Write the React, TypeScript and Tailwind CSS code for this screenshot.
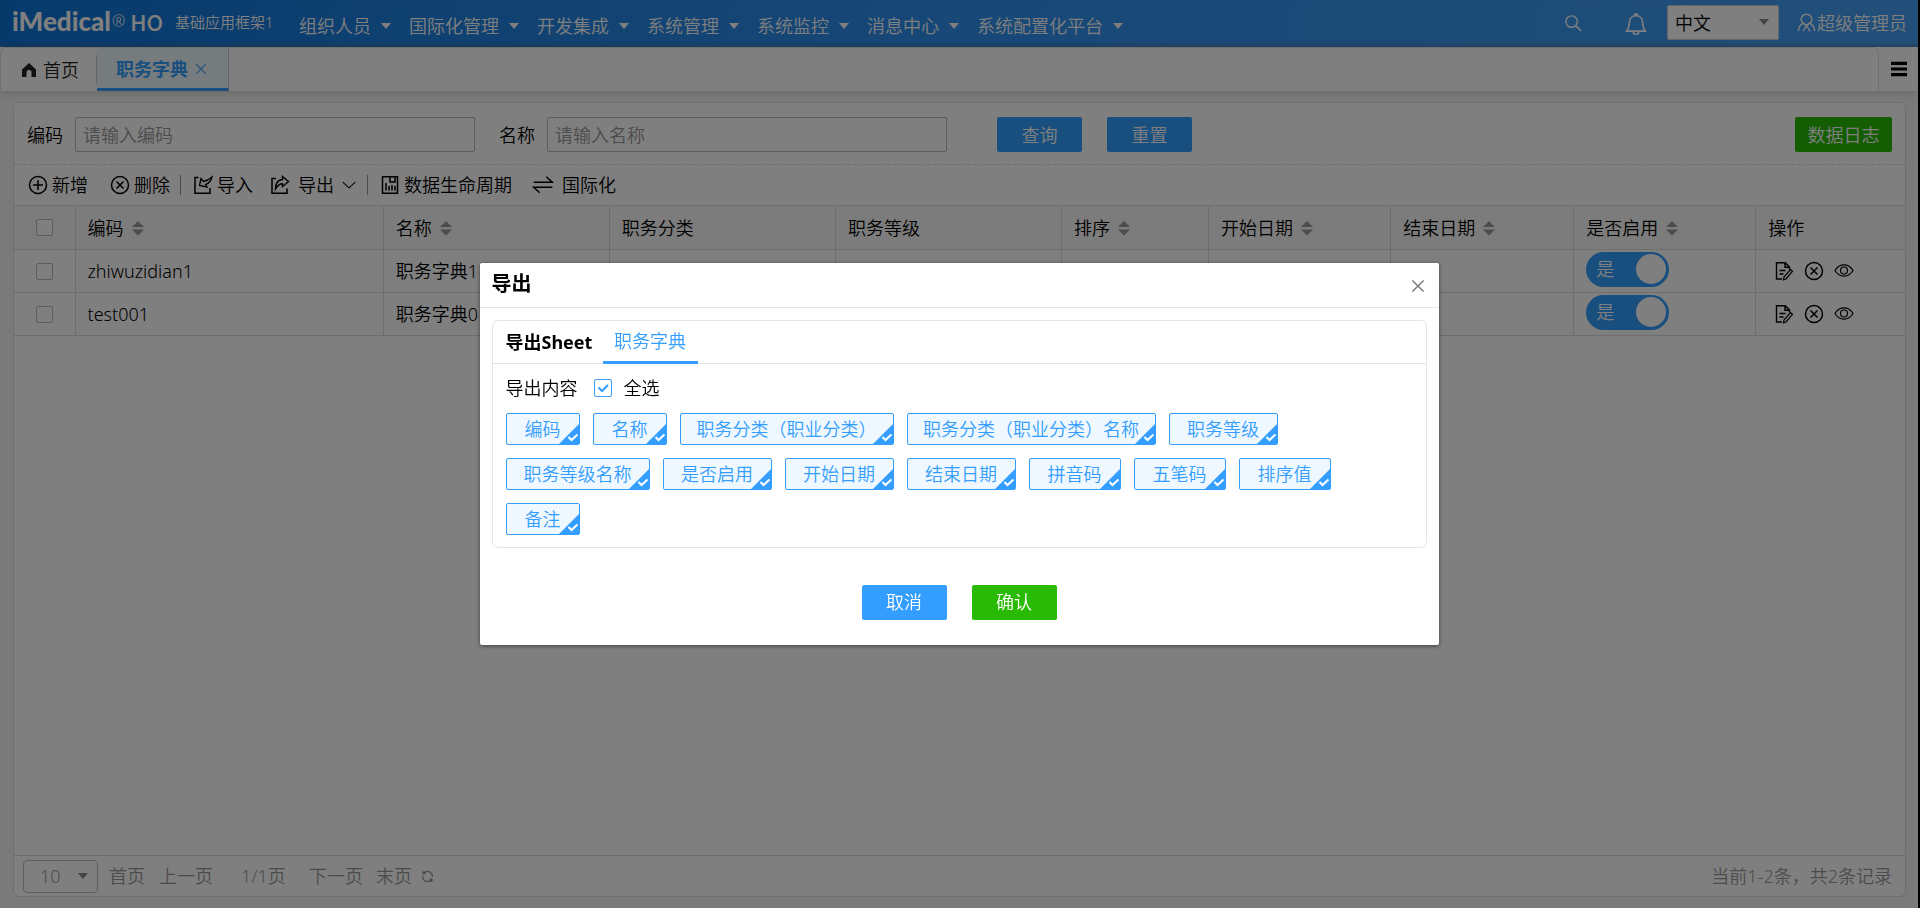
import { useState } from "react";
import type { ReactNode } from "react";
import clsx from "clsx";

const menus = [
  "组织人员",
  "国际化管理",
  "开发集成",
  "系统管理",
  "系统监控",
  "消息中心",
  "系统配置化平台",
];

const columns = [
  { title: "编码", width: "w-[308px]", sortable: true },
  { title: "名称", width: "w-[226px]", sortable: true },
  { title: "职务分类", width: "w-[226px]", sortable: false },
  { title: "职务等级", width: "w-[226px]", sortable: false },
  { title: "排序", width: "w-[147px]", sortable: true },
  { title: "开始日期", width: "w-[182px]", sortable: true },
  { title: "结束日期", width: "w-[183px]", sortable: true },
  { title: "是否启用", width: "w-[182px]", sortable: true },
  { title: "操作", width: "w-[149px]", sortable: false },
];

const rows = [
  { code: "zhiwuzidian1", name: "职务字典1" },
  { code: "test001", name: "职务字典01" },
];

const exportFields = [
  { label: "编码", width: "w-[74px]" },
  { label: "名称", width: "w-[74px]" },
  { label: "职务分类（职业分类）", width: "w-[214px]" },
  { label: "职务分类（职业分类）名称", width: "w-[249px]" },
  { label: "职务等级", width: "w-[109px]" },
  { label: "职务等级名称", width: "w-[144px]" },
  { label: "是否启用", width: "w-[109px]" },
  { label: "开始日期", width: "w-[109px]" },
  { label: "结束日期", width: "w-[109px]" },
  { label: "拼音码", width: "w-[92px]" },
  { label: "五笔码", width: "w-[92px]" },
  { label: "排序值", width: "w-[92px]" },
  { label: "备注", width: "w-[74px]" },
];

type IconProps = { className?: string; children: ReactNode };

function Icon({ className, children }: IconProps) {
  return (
    <svg
      viewBox="0 0 20 20"
      fill="none"
      stroke="currentColor"
      strokeWidth="1.5"
      className={clsx("shrink-0", className ?? "size-5")}
      aria-hidden="true"
    >
      {children}
    </svg>
  );
}

const AddIcon = () => (
  <Icon>
    <circle cx="10" cy="10" r="8.5" />
    <path d="M10 5v10M5 10h10" />
  </Icon>
);

const RemoveIcon = () => (
  <Icon>
    <circle cx="10" cy="10" r="8.5" />
    <path d="M6.5 6.5l7 7M13.5 6.5l-7 7" />
  </Icon>
);

const ImportIcon = () => (
  <Icon>
    <path d="M5.500 2.500H2v15.700h15V13" />
    <path
      d="M6.500 10.500L8 3.500L10.500 6.500C13.500 6 16 4.500 19 2C18 6 16 8.500 12.500 9.500L14 12Z"
      strokeWidth="1.3"
    />
  </Icon>
);

const ExportIcon = () => (
  <Icon>
    <path d="M6 3.500H2v14.800h15V13.500" />
    <path
      d="M12.500 1.500L18.500 6.500L12.500 11.500V8.800C9.500 8.800 7.500 10.500 5.500 14C5.500 8.500 8 4.800 12.500 4.500Z"
      strokeWidth="1.4"
    />
  </Icon>
);

const LifecycleIcon = () => (
  <Icon>
    <path d="M2.500 1.800h15v16.400h-15zM10 2v5h5V2M6 8v7.500M9 11v4.500M12 10v5.500M15 11v4.500" />
  </Icon>
);

const SwapIcon = () => (
  <Icon className="size-[22px]">
    <path d="M1.500 7.500h17L13 2.500M18.500 12h-17L7 17" strokeWidth="1.3" />
  </Icon>
);

const EditIcon = () => (
  <Icon>
    <path
      d="M8 18H2.500V1.800h8.700L15.500 6v2.500M11 2v4.300h4.300M5.500 9.500h6M5.500 13h4"
      strokeWidth="1.400"
    />
    <path d="M16.500 8.500l2 1.800-6.500 7.700-2.500.8.500-2.700z" strokeWidth="1.2" />
  </Icon>
);

const EyeIcon = () => (
  <Icon>
    <path
      d="M1 9.500C5.500 2 14.500 2 19 9.500C14.500 17 5.500 17 1 9.500Z"
      strokeWidth="1.200"
    />
    <circle cx="10" cy="9.500" r="3.500" strokeWidth="1.200" />
  </Icon>
);

function Caret({ className }: { className?: string }) {
  return (
    <svg
      viewBox="0 0 10 6"
      className={clsx("w-[10px] h-[6px] shrink-0", className)}
      fill="currentColor"
      aria-hidden="true"
    >
      <path d="M0 0h10L5 6z" />
    </svg>
  );
}

function SortIcon() {
  return (
    <svg
      viewBox="0 0 12 16"
      className="w-3 h-4 shrink-0 text-[#999]"
      fill="currentColor"
      aria-hidden="true"
    >
      <path d="M6 1l6 6H0zM6 15.500l6-6H0z" />
    </svg>
  );
}

function Header() {
  return (
    <header className="flex h-[47px] items-center bg-linear-to-r from-[#0b75d8] via-[#2f90ee] to-[#449ff5] pr-[11px] text-white shadow-[inset_0_-3px_4px_-1px_rgba(90,110,130,0.5)]">
      <h1 className="ml-3 flex w-[151px] shrink-0 items-center pb-[6px] whitespace-nowrap">
        <span className="font-['Lato',sans-serif] text-[26px] leading-10 font-black">
          iMedical
        </span>
        <span className="ml-px text-base leading-6">®</span>
        <span className="ml-[5px] pt-px font-['Noto_Sans_CJK_SC',sans-serif] text-[22px] leading-9 font-medium">
          HO
        </span>
      </h1>
      <span className="ml-3 w-[100px] shrink-0 pb-1 whitespace-nowrap text-[15px]">
        基础应用框架1
      </span>
      <nav className="ml-6 flex gap-[18px] pt-1">
        {menus.map((menu) => (
          <button
            key={menu}
            type="button"
            className="flex items-center gap-[10px] whitespace-nowrap"
          >
            {menu}
            <Caret />
          </button>
        ))}
      </nav>
      <button type="button" className="ml-auto" aria-label="搜索">
        <Icon className="size-[19px]">
          <circle cx="8" cy="8" r="6" />
          <path d="M12.500 12.500l5.500 5.500" />
        </Icon>
      </button>
      <button type="button" className="ml-[42px]" aria-label="消息">
        <Icon className="size-[22px]">
          <path d="M1.500 16.500h17C16.500 14 16 12 16 8.500C16 5 13.500 2.500 10 2.500S4 5 4 8.500C4 12 3.500 14 1.500 16.500zM8.500 2.300a1.500 1.500 0 0 1 3 0M7.500 17a2.500 2.500 0 0 0 5 0" />
        </Icon>
      </button>
      <div className="relative ml-5 pb-[2px]">
        <select
          aria-label="语言"
          defaultValue="zh"
          className="block h-[35px] w-28 appearance-none rounded-xs border border-[#ccc] bg-white pl-[7px] text-black"
        >
          <option value="zh">中文</option>
        </select>
        <Caret className="pointer-events-none absolute top-[14px] right-[10px] text-[#888]" />
      </div>
      <button
        type="button"
        className="ml-[18px] flex items-center gap-px pb-[2px] whitespace-nowrap"
      >
        <Icon className="size-[19px]">
          <path d="M10 1.500a5 5 0 0 1 3 9.300C11.500 13 8.500 13 7 10.800A5 5 0 0 1 10 1.500zM1.500 19c0-4 2-6.500 5-8M18.500 19c0-4-2-6.500-5-8M6.500 19l3.500-6 3.500 6" />
        </Icon>
        超级管理员
      </button>
    </header>
  );
}

function TabBar() {
  return (
    <div className="flex h-11 bg-white shadow-[0_2px_8px_rgba(0,0,0,0.15)]">
      <div
        role="tablist"
        className="flex flex-1 rounded-t-md border border-b-0 border-[#e2e2e2]"
      >
        <button
          type="button"
          role="tab"
          aria-selected="false"
          className="my-[7px] flex w-24 items-center border-r border-[#ccc] pl-5 text-[#222]"
        >
          <svg
            viewBox="0 0 16 16"
            className="mr-[6px] size-4"
            fill="currentColor"
            aria-hidden="true"
          >
            <path d="M8 1l7 6.500V15h-4.500v-4.500a2.500 2.500 0 0 0-5 0V15H1V7.500z" />
          </svg>
          首页
        </button>
        <div className="flex w-[132px] items-center border-r border-b-3 border-r-[#ccc] border-b-[#339eff] bg-[#ecf6fd] pt-[2px] pl-[19px] text-[#339eff]">
          <button
            type="button"
            role="tab"
            aria-selected="true"
            className="whitespace-nowrap font-bold"
          >
            职务字典
          </button>
          <button type="button" aria-label="关闭" className="ml-[7px]">
            <Icon className="size-3">
              <path d="M2 2l16 16M18 2L2 18" strokeWidth="1.800" />
            </Icon>
          </button>
        </div>
      </div>
      <button
        type="button"
        aria-label="更多"
        className="flex w-[39px] items-center justify-center text-black"
      >
        <Icon className="size-4">
          <path d="M0 3h20M0 10h20M0 17h20" strokeWidth="4" />
        </Icon>
      </button>
    </div>
  );
}

function SearchForm() {
  return (
    <form
      className="flex items-center border-b border-dashed border-[#ddd] px-[13px] pt-[14px] pb-3"
      onSubmit={(e) => e.preventDefault()}
    >
      <label htmlFor="code" className="w-12 shrink-0">
        编码
      </label>
      <input
        id="code"
        placeholder="请输入编码"
        className="h-[35px] w-[400px] rounded-xs border border-[#bbb] px-[7px] placeholder:text-[#999]"
      />
      <label htmlFor="name" className="ml-6 w-12 shrink-0">
        名称
      </label>
      <input
        id="name"
        placeholder="请输入名称"
        className="h-[35px] w-[400px] rounded-xs border border-[#bbb] px-[7px] placeholder:text-[#999]"
      />
      <button
        type="submit"
        className="ml-[50px] h-[35px] w-[85px] rounded-xs bg-[#339eff] text-white"
      >
        查询
      </button>
      <button
        type="reset"
        className="ml-[25px] h-[35px] w-[85px] rounded-xs bg-[#339eff] text-white"
      >
        重置
      </button>
      <button
        type="button"
        className="ml-auto h-[35px] w-[97px] rounded-xs bg-[#28ba05] text-white"
      >
        数据日志
      </button>
    </form>
  );
}

function Toolbar() {
  return (
    <div className="flex h-10 items-center pl-[14px] text-black">
      <button type="button" className="flex w-[82px] items-center gap-1">
        <AddIcon />
        新增
      </button>
      <button type="button" className="flex w-[70px] items-center gap-1">
        <RemoveIcon />
        删除
      </button>
      <span className="mr-3 h-5 w-px bg-[#999]" />
      <button type="button" className="flex w-[77px] items-center gap-1">
        <ImportIcon />
        导入
      </button>
      <button type="button" className="flex w-[97px] items-center gap-2">
        <ExportIcon />
        导出
        <Icon className="size-[14px]">
          <path d="M1 6l9 8 9-8" />
        </Icon>
      </button>
      <span className="mr-3 h-5 w-px bg-[#999]" />
      <button type="button" className="flex w-[152px] items-center gap-1">
        <LifecycleIcon />
        数据生命周期
      </button>
      <button type="button" className="flex items-center gap-2">
        <SwapIcon />
        国际化
      </button>
    </div>
  );
}

function StatusSwitch({ label }: { label: string }) {
  return (
    <label className="relative flex h-[35px] w-[83px] cursor-pointer items-center justify-between rounded-full bg-[#339eff] pr-[3px] pl-[10px] text-white">
      <input
        type="checkbox"
        role="switch"
        defaultChecked
        aria-label={label}
        className="absolute inset-0 appearance-none"
      />
      是
      <span className="size-[30px] rounded-full bg-white" />
    </label>
  );
}

function CheckCell({ label }: { label: string }) {
  return (
    <input
      type="checkbox"
      aria-label={label}
      className="mx-auto block size-[17px] appearance-none rounded-xs border border-[#bbb] bg-white"
    />
  );
}

function DataTable() {
  return (
    <table className="w-full table-fixed border-collapse text-left text-black">
      <thead>
        <tr className="h-11 bg-[#f8f8f8]">
          <th className="w-[61px] border-y border-r border-[#ddd]">
            <CheckCell label="全选" />
          </th>
          {columns.map((col) => (
            <th
              key={col.title}
              className={clsx(
                "border border-[#ddd] px-3 font-[350] last:border-r-0",
                col.width
              )}
            >
              <span className="flex items-center gap-2">
                {col.title}
                {col.sortable && <SortIcon />}
              </span>
            </th>
          ))}
        </tr>
      </thead>
      <tbody>
        {rows.map((row) => (
          <tr key={row.code} className="h-[43px]">
            <td className="border-y border-r border-[#ddd]">
              <CheckCell label={row.code} />
            </td>
            <td className="border border-[#ddd] px-3">{row.code}</td>
            <td className="border border-[#ddd] px-3">{row.name}</td>
            <td className="border border-[#ddd]" />
            <td className="border border-[#ddd]" />
            <td className="border border-[#ddd]" />
            <td className="border border-[#ddd]" />
            <td className="border border-[#ddd]" />
            <td className="border border-[#ddd] px-3 pb-1">
              <StatusSwitch label={`${row.name} 是否启用`} />
            </td>
            <td className="border-y border-l border-[#ddd] pl-[18px]">
              <div className="flex items-center gap-[10px]">
                <button type="button" aria-label="编辑">
                  <EditIcon />
                </button>
                <button type="button" aria-label="删除">
                  <RemoveIcon />
                </button>
                <button type="button" aria-label="查看">
                  <EyeIcon />
                </button>
              </div>
            </td>
          </tr>
        ))}
      </tbody>
    </table>
  );
}

function Pagination() {
  return (
    <footer className="flex h-[41px] items-center border-t border-[#ddd] pr-[13px] pl-[9px] whitespace-nowrap text-[#999]">
      <div className="relative mr-[11px]">
        <select
          aria-label="每页条数"
          defaultValue="10"
          className="block h-[33px] w-[75px] appearance-none rounded-sm border border-[#bbb] pl-4"
        >
          <option>10</option>
        </select>
        <Caret className="pointer-events-none absolute top-[13px] right-[10px] text-[#888]" />
      </div>
      <button type="button" className="w-[50px] text-left">
        首页
      </button>
      <button type="button" className="w-[82px] text-left">
        上一页
      </button>
      <span className="w-[68px]">1/1页</span>
      <button type="button" className="w-[67px] text-left">
        下一页
      </button>
      <button type="button" className="w-[45px] text-left">
        末页
      </button>
      <button type="button" aria-label="刷新">
        <Icon className="size-[13px]">
          <path
            d="M6 3.500C11 0 18 4 17.500 11M14 16.500C9 20 2 16 2.500 9"
            strokeWidth="2"
          />
          <circle cx="4.500" cy="4.500" r="2" fill="currentColor" />
          <circle cx="15.500" cy="15.500" r="2" fill="currentColor" />
        </Icon>
      </button>
      <span className="ml-auto">当前1-2条，共2条记录</span>
    </footer>
  );
}

function FieldTag({ label, width }: { label: string; width: string }) {
  const [selected, setSelected] = useState(true);

  return (
    <button
      type="button"
      aria-pressed={selected}
      onClick={() => setSelected(!selected)}
      className={clsx(
        "relative h-8 rounded-xs border border-[#339eff] bg-[#f0f8ff] whitespace-nowrap text-[#339eff]",
        width
      )}
    >
      {label}
      {selected && (
        <svg
          viewBox="0 0 20 20"
          className="absolute right-0 bottom-0 size-5"
          aria-hidden="true"
        >
          <path d="M20 0v20H0z" fill="#339eff" />
          <path
            d="M9.500 13l3 3 6-5.500"
            fill="none"
            stroke="#fff"
            strokeWidth="2"
          />
        </svg>
      )}
    </button>
  );
}

function ExportDialog() {
  return (
    <div className="fixed inset-0 flex items-center justify-center bg-black/50 pr-[2px] pb-px">
      <section
        role="dialog"
        aria-modal="true"
        aria-labelledby="export-title"
        className="w-[959px] rounded-xs bg-white text-black shadow-[0_1px_4px_rgba(0,0,0,0.5)]"
      >
        <div className="flex h-[45px] items-center justify-between border-b border-[#e5e5e5] pt-[2px] pr-[14px] pl-3">
          <h2 id="export-title" className="pb-1 text-xl leading-9 font-bold">
            导出
          </h2>
          <button type="button" aria-label="关闭" className="text-[#777]">
            <Icon className="size-[14px]">
              <path d="M2 2l16 16M18 2L2 18" strokeWidth="2" />
            </Icon>
          </button>
        </div>
        <div className="mx-3 mt-3 rounded-md border border-[#e5e5e5]">
          <div className="flex h-[43px] border-b border-[#e5e5e5] pl-[13px]">
            <span className="w-[97px] self-center whitespace-nowrap font-bold">
              导出Sheet
            </span>
            <button
              type="button"
              role="tab"
              aria-selected="true"
              className="-mb-px w-[95px] border-b-3 border-[#339eff] pt-px text-[#339eff]"
            >
              职务字典
            </button>
          </div>
          <div className="pt-3 pr-3 pb-3 pl-[13px]">
            <div className="flex items-center pb-[13px]">
              <span className="w-[88px]">导出内容</span>
              <label className="flex items-center gap-3">
                <span className="relative flex">
                  <input
                    type="checkbox"
                    defaultChecked
                    className="peer size-[18px] appearance-none rounded-xs border border-[#339eff] bg-white"
                  />
                  <svg
                    viewBox="0 0 18 18"
                    className="pointer-events-none absolute inset-0 size-[18px] opacity-0 peer-checked:opacity-100"
                    aria-hidden="true"
                  >
                    <path
                      d="M4.500 8.500l3.500 3.500 6-6"
                      fill="none"
                      stroke="#339eff"
                      strokeWidth="2"
                    />
                  </svg>
                </span>
                全选
              </label>
            </div>
            <div className="flex flex-wrap gap-[13px]">
              {exportFields.map((field) => (
                <FieldTag key={field.label} {...field} />
              ))}
            </div>
          </div>
        </div>
        <div className="flex justify-center gap-[25px] pt-[37px] pb-[25px]">
          <button
            type="button"
            className="h-[35px] w-[85px] rounded-xs bg-[#339eff] text-white"
          >
            取消
          </button>
          <button
            type="button"
            className="h-[35px] w-[85px] rounded-xs bg-[#28ba05] text-white"
          >
            确认
          </button>
        </div>
      </section>
    </div>
  );
}

function App() {
  return (
    <div className="flex min-h-screen flex-col border-r-2 border-black bg-[#f5f5f5] font-['Noto_Sans','Noto_Sans_CJK_SC',sans-serif] text-lg leading-6 font-[350] text-black">
      <Header />
      <TabBar />
      <main className="flex flex-1 flex-col px-3 pt-[11px] pb-[11px]">
        <div className="ml-px flex flex-1 flex-col rounded-md border border-[#ddd] bg-white">
          <SearchForm />
          <Toolbar />
          <DataTable />
          <div className="flex-1" />
          <Pagination />
        </div>
      </main>
      <ExportDialog />
    </div>
  );
}

export default App;
